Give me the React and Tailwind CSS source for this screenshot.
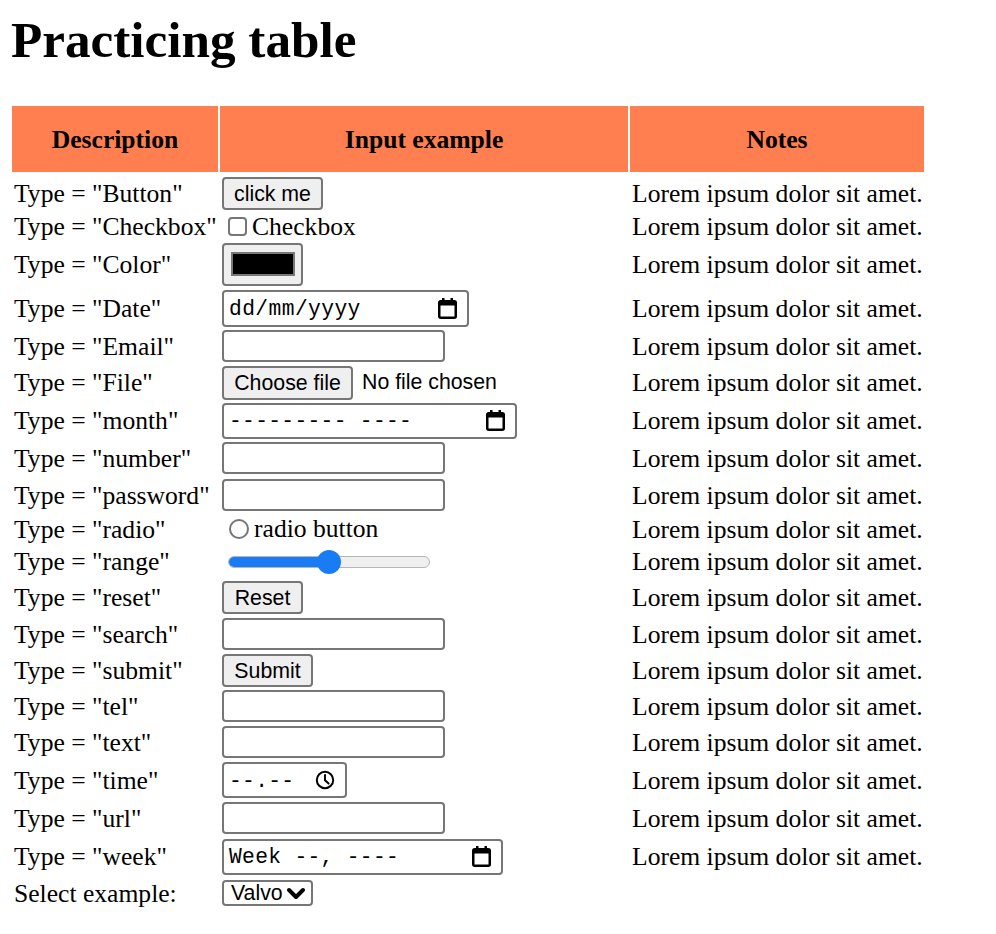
import React from "react";

const serif = "font-['Liberation_Serif','Times_New_Roman',serif]";
const sans = "font-['Liberation_Sans',Arial,sans-serif]";
const mono = "font-['Liberation_Mono','Courier_New',monospace]";

function CalendarIcon() {
  return (
    <svg width="19" height="21" viewBox="0 0 19 21" className="shrink-0">
      <rect x="1.25" y="3.25" width="16.5" height="16.5" rx="1.5" fill="none" stroke="#000" strokeWidth="2.5" />
      <rect x="1" y="3" width="17" height="4.5" fill="#000" />
      <rect x="4" y="0" width="2.5" height="4" fill="#000" />
      <rect x="12.5" y="0" width="2.5" height="4" fill="#000" />
    </svg>
  );
}

function ClockIcon() {
  return (
    <svg width="20" height="20" viewBox="0 0 20 20" className="shrink-0">
      <circle cx="10" cy="10" r="8.2" fill="none" stroke="#000" strokeWidth="2" />
      <path d="M10 5 V10.3 L13.6 13.6" fill="none" stroke="#000" strokeWidth="2" strokeLinecap="round" strokeLinejoin="round" />
    </svg>
  );
}

function Btn({ children, w }) {
  return (
    <div
      className={`${sans} ${w} h-[33px] flex items-center justify-center border-2 border-[#767676] rounded-[4px] bg-[#efefef] text-[21.3px] text-black leading-none pt-[3px]`}
    >
      {children}
    </div>
  );
}

function TextBox() {
  return <div className="w-[223px] h-[32px] border-2 border-[#767676] rounded-[4px] bg-white" />;
}

function MonoBox({ w, text, icon }) {
  return (
    <div
      className={`${w} h-[36px] flex items-center justify-between border-2 border-[#767676] rounded-[4px] bg-white pl-[5px] pr-[10px]`}
    >
      <span className={`${mono} text-[21.3px] leading-none text-black whitespace-pre pt-[3px] tracking-[0.3px]`}>{text}</span>
      {icon}
    </div>
  );
}

const rows = [
  {
    label: 'Type = "Button"',
    h: "h-[38px]",
    ctrl: <Btn w="w-[101px]">click me</Btn>,
  },
  {
    label: 'Type = "Checkbox"',
    h: "h-[25px]",
    ctrl: (
      <div className="flex items-center">
        <div className="ml-[6px] w-[19px] h-[19px] border-2 border-[#767676] rounded-[4px] bg-white" />
        <span className="ml-[5px]">Checkbox</span>
      </div>
    ),
  },
  {
    label: 'Type = "Color"',
    h: "h-[46px]",
    ctrl: (
      <div className="w-[81px] h-[43px] flex items-center justify-center border-2 border-[#767676] rounded-[4px] bg-[#efefef]">
        <div className="w-[64px] h-[24px] bg-black border-2 border-[#777777]" />
      </div>
    ),
  },
  {
    label: 'Type = "Date"',
    h: "h-[38px]",
    ctrl: (
      <div className="w-[247px] h-[37px] flex items-center justify-between border-2 border-[#767676] rounded-[4px] bg-white pl-[5px] pr-[10px]">
        <span className={`${mono} text-[21.3px] leading-none text-black whitespace-pre pt-[4px] tracking-[0.4px]`}>dd/mm/yyyy</span>
        <CalendarIcon />
      </div>
    ),
  },
  { label: 'Type = "Email"', h: "h-[34px]", ctrl: <TextBox /> },
  {
    label: 'Type = "File"',
    h: "h-[35px]",
    ctrl: (
      <div className="flex items-center">
        <div
          className={`${sans} w-[131px] h-[34px] flex items-center justify-center border-2 border-[#767676] rounded-[4px] bg-[#efefef] text-[21.3px] leading-none text-black pt-[3px]`}
        >
          Choose file
        </div>
        <span className={`${sans} ml-[9px] text-[21.3px] leading-none text-black`}>No file chosen</span>
      </div>
    ),
  },
  {
    label: 'Type = "month"',
    h: "h-[37px]",
    ctrl: <MonoBox w="w-[295px]" text="--------- ----" icon={<CalendarIcon />} />,
  },
  { label: 'Type = "number"', h: "h-[34px]", ctrl: <TextBox /> },
  { label: 'Type = "password"', h: "h-[36px]", ctrl: <TextBox /> },
  {
    label: 'Type = "radio"',
    h: "h-[28px]",
    ctrl: (
      <div className="flex items-center">
        <div className="ml-[7px] w-[20px] h-[20px] border-2 border-[#767676] rounded-full bg-white" />
        <span className="ml-[5px]">radio button</span>
      </div>
    ),
  },
  {
    label: 'Type = "range"',
    h: "h-[32px]",
    ctrl: (
      <div className="relative ml-[6px] mt-[2px] w-[202px] h-[24px] flex items-center">
        <div className="w-full h-[12px] rounded-full bg-[#efefef] border-[1.5px] border-[#b5b5b5] overflow-hidden">
          <div className="w-[100px] h-full bg-[#1a7cf5]" />
        </div>
        <div className="absolute left-[89px] top-0 w-[24px] h-[24px] rounded-full bg-[#1a7cf5]" />
      </div>
    ),
  },
  { label: 'Type = "reset"', h: "h-[36px]", ctrl: <Btn w="w-[81px]">Reset</Btn> },
  { label: 'Type = "search"', h: "h-[34px]", ctrl: <TextBox /> },
  { label: 'Type = "submit"', h: "h-[34px]", ctrl: <Btn w="w-[91px]">Submit</Btn> },
  { label: 'Type = "tel"', h: "h-[34px]", ctrl: <TextBox /> },
  { label: 'Type = "text"', h: "h-[34px]", ctrl: <TextBox /> },
  {
    label: 'Type = "time"',
    h: "h-[38px]",
    ctrl: <MonoBox w="w-[125px]" text="--.--" icon={<ClockIcon />} />,
  },
  { label: 'Type = "url"', h: "h-[34px]", ctrl: <TextBox /> },
  {
    label: 'Type = "week"',
    h: "h-[39px]",
    ctrl: <MonoBox w="w-[281px]" text="Week --, ----" icon={<CalendarIcon />} />,
  },
];

export default function App() {
  return (
    <div className={`${serif} bg-white text-black min-h-[934px] pt-[14px]`}>
      <h1 className="pl-[11px] text-[51.2px] font-bold leading-[51px]">Practicing table</h1>
      <table className="mt-[39px] ml-[10px] w-[916px] table-fixed border-separate border-spacing-[2px] text-[25.6px] leading-[24px]">
        <colgroup>
          <col className="w-[206px]" />
          <col className="w-[408px]" />
          <col className="w-[294px]" />
        </colgroup>
        <thead>
          <tr className="h-[66px]">
            <th className="bg-[#ff7f50] font-bold text-center align-middle p-0 pt-[2px]">Description</th>
            <th className="bg-[#ff7f50] font-bold text-center align-middle p-0 pt-[2px]">Input example</th>
            <th className="bg-[#ff7f50] font-bold text-center align-middle p-0 pt-[2px]">Notes</th>
          </tr>
        </thead>
        <tbody>
          {rows.map((r) => (
            <tr key={r.label} className={r.h}>
              <td className="p-0 pl-[2px] pt-[1px] align-middle whitespace-nowrap">{r.label}</td>
              <td className="p-0 pl-[2px] align-middle">{r.ctrl}</td>
              <td className="p-0 pl-[2px] pt-[1px] align-middle whitespace-nowrap">Lorem ipsum dolor sit amet.</td>
            </tr>
          ))}
          <tr className="h-[30px]">
            <td className="p-0 pl-[2px] pt-[1px] align-middle whitespace-nowrap">Select example:</td>
            <td className="p-0 pl-[2px] align-middle">
              <div className="w-[91px] h-[26px] flex items-center justify-between border-2 border-[#767676] rounded-[4px] bg-white pl-[7px] pr-[5px]">
                <span className={`${sans} text-[21.3px] leading-none text-black pt-[2px]`}>Valvo</span>
                <svg width="20" height="13" viewBox="0 0 20 13">
                  <path d="M3 3 L10 10 L17 3" fill="none" stroke="#000" strokeWidth="4" strokeLinecap="round" strokeLinejoin="round" />
                </svg>
              </div>
            </td>
            <td className="p-0" />
          </tr>
        </tbody>
      </table>
    </div>
  );
}
